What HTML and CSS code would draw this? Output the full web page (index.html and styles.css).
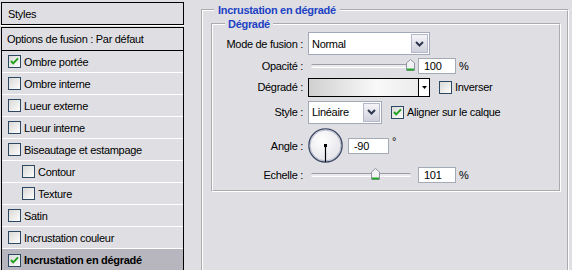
FILE: index.html
```html
<!DOCTYPE html>
<html lang="fr">
<head>
    <meta charset="UTF-8">
    <title>Style de calque - Incrustation en dégradé</title>
    <link rel="stylesheet" href="styles.css">
</head>
<body>
    <div class="dialog">
        <aside class="styles">
            <div class="styles-head">Styles</div>
            <ul class="styles-list">
                <li class="styles-item styles-item--options">Options de fusion : Par défaut</li>
                <li class="styles-item"><span class="check"><svg width="11" height="11" viewBox="0 0 11 11"><polyline points="2,5 4.2,7.4 9,2.4" /></svg></span>Ombre portée</li>
                <li class="styles-item"><span class="check"></span>Ombre interne</li>
                <li class="styles-item"><span class="check"></span>Lueur externe</li>
                <li class="styles-item"><span class="check"></span>Lueur interne</li>
                <li class="styles-item"><span class="check"></span>Biseautage et estampage</li>
                <li class="styles-item styles-item--sub"><span class="check"></span>Contour</li>
                <li class="styles-item styles-item--sub"><span class="check"></span>Texture</li>
                <li class="styles-item"><span class="check"></span>Satin</li>
                <li class="styles-item"><span class="check"></span>Incrustation couleur</li>
                <li class="styles-item is-active"><span class="check"><svg width="11" height="11" viewBox="0 0 11 11"><polyline points="2,5 4.2,7.4 9,2.4" /></svg></span>Incrustation en dégradé</li>
            </ul>
        </aside>

        <main class="settings">
            <fieldset class="group">
                <legend class="group-title">Incrustation en dégradé</legend>
                <fieldset class="group group--inner">
                    <legend class="group-title">Dégradé</legend>
                    <div class="form">
                        <label class="form-label">Mode de fusion :</label>
                        <div class="form-ctrl">
                            <div class="combo combo--wide">
                                <span class="combo-value">Normal</span>
                                <span class="combo-btn"><svg width="9" height="6" viewBox="0 0 9 6"><polyline points="1,1 4.5,4.5 8,1" /></svg></span>
                            </div>
                        </div>

                        <label class="form-label">Opacité :</label>
                        <div class="form-ctrl">
                            <div class="slider">
                                <div class="slider-track"></div>
                                <svg class="slider-thumb" style="left: calc(100% - 5px)" width="9" height="12" viewBox="0 0 9 12"><path d="M0.5,4 L4.5,0.5 L8.5,4 V11.5 H0.5 Z" /><rect x="1" y="9.5" width="7" height="2" /></svg>
                            </div>
                            <input class="num" value="100">
                            <span class="unit">%</span>
                        </div>

                        <label class="form-label">Dégradé :</label>
                        <div class="form-ctrl">
                            <div class="gradient">
                                <span class="gradient-fill"></span>
                                <span class="gradient-btn"><svg width="5" height="3" viewBox="0 0 5 3"><polygon points="0,0 5,0 2.5,3" /></svg></span>
                            </div>
                            <span class="option"><span class="check"></span>Inverser</span>
                        </div>

                        <label class="form-label">Style :</label>
                        <div class="form-ctrl">
                            <div class="combo combo--narrow">
                                <span class="combo-value">Linéaire</span>
                                <span class="combo-btn"><svg width="9" height="6" viewBox="0 0 9 6"><polyline points="1,1 4.5,4.5 8,1" /></svg></span>
                            </div>
                            <span class="option"><span class="check"><svg width="11" height="11" viewBox="0 0 11 11"><polyline points="2,5 4.2,7.4 9,2.4" /></svg></span>Aligner sur le calque</span>
                        </div>

                        <label class="form-label">Angle :</label>
                        <div class="form-ctrl">
                            <svg class="dial" width="36" height="36" viewBox="0 0 36 36">
                                <defs>
                                    <radialGradient id="dialFill" cx="40%" cy="35%" r="70%">
                                        <stop offset="0" stop-color="#ffffff" />
                                        <stop offset="1" stop-color="#e2e2e8" />
                                    </radialGradient>
                                </defs>
                                <circle cx="17.5" cy="17.5" r="16.6" fill="url(#dialFill)" stroke="#3d4866" stroke-width="1.4" />
                                <circle cx="17.5" cy="17.5" r="15.4" fill="none" stroke="#a9afc2" stroke-width="0.8" />
                                <line x1="17.5" y1="17.5" x2="17.5" y2="34" stroke="#000" stroke-width="1.2" />
                                <rect x="16" y="16" width="3" height="3" fill="#000" />
                            </svg>
                            <input class="num num--angle" value="-90">
                            <span class="degree">°</span>
                        </div>

                        <label class="form-label">Echelle :</label>
                        <div class="form-ctrl">
                            <div class="slider">
                                <div class="slider-track"></div>
                                <svg class="slider-thumb" style="left: calc(63.6% - 4px)" width="9" height="12" viewBox="0 0 9 12"><path d="M0.5,4 L4.5,0.5 L8.5,4 V11.5 H0.5 Z" /><rect x="1" y="9.5" width="7" height="2" /></svg>
                            </div>
                            <input class="num" value="101">
                            <span class="unit">%</span>
                        </div>
                    </div>
                </fieldset>
            </fieldset>
        </main>
    </div>
</body>
</html>
```

FILE: styles.css
```css
body {
    margin: 0;
    background-color: #dfdfe3;
    color: #000;
    font-family: "Liberation Sans", Arial, sans-serif;
    font-size: 11px;
    letter-spacing: -0.3px;
    overflow: hidden;
}

.dialog {
    display: flex;
    height: 270px;
}

/* Left column: list of layer styles */
.styles {
    flex: none;
    width: 183px;
    margin: 2px 0 0 1px;
}

.styles-head {
    height: 23px;
    box-sizing: border-box;
    border: 1px solid #000;
    padding-left: 6px;
    display: flex;
    align-items: center;
    margin-bottom: 2px;
    box-shadow: 0 1px 0 #fff;
}

.styles-list {
    list-style: none;
    margin: 0;
    padding: 0;
    border: 1px solid #000;
    border-bottom: 0;
}

.styles-item {
    height: 21px;
    border-bottom: 1px solid #fff;
    padding-left: 6px;
    display: flex;
    align-items: center;
    gap: 3px;
}

.styles-item--options {
    height: 22px;
    border-bottom-color: #000;
    padding-left: 5px;
}

.styles-item--sub {
    padding-left: 20px;
}

.styles-item.is-active {
    background-color: #b7b6be;
    font-weight: bold;
    border-bottom: 0;
    height: 22px;
}

/* XP style checkbox */
.check {
    flex: none;
    width: 13px;
    height: 13px;
    box-sizing: border-box;
    border: 1px solid #2c4863;
    background: linear-gradient(135deg, #d9d9d6, #fdfdfd);
    display: flex;
    align-items: center;
    justify-content: center;
}

.check polyline {
    fill: none;
    stroke: #21a121;
    stroke-width: 2;
}

/* Right column */
.settings {
    flex: 1;
    padding: 0 3px 0 17px;
}

.group {
    margin: 3px 0 0;
    padding: 0 6px 0 8px;
    border: 2px groove #fff;
    height: 300px;
}

.group-title {
    margin-left: 3px;
    padding: 0 4px;
    line-height: 14px;
    color: #2142c4;
    font-weight: bold;
}

.group--inner {
    height: auto;
    margin-top: 0;
    padding: 1px 0 7px 0;
}

.group--inner .group-title {
    margin-left: 12px;
    padding: 0 3px;
}

.form {
    display: grid;
    grid-template-columns: 90px auto;
    grid-template-rows: 23px 16px 20px 24px 37px 16px;
    column-gap: 5px;
    row-gap: 3px;
}

.form-label {
    display: flex;
    align-items: center;
    justify-content: flex-end;
}

.form-ctrl {
    display: flex;
    align-items: center;
}

/* Combo box */
.combo {
    height: 23px;
    box-sizing: border-box;
    border: 1px solid #a3a9b8;
    background-color: #fff;
    display: flex;
    align-items: stretch;
}

.combo--wide {
    width: 122px;
}

.combo--narrow {
    width: 74px;
}

.combo-value {
    flex: 1;
    padding-left: 3px;
    display: flex;
    align-items: center;
}

.combo-btn {
    width: 15px;
    margin: 1px;
    border: 1px solid #b4b8ca;
    background: linear-gradient(#f4f4f8, #d1d1dc);
    display: flex;
    align-items: center;
    justify-content: center;
}

.combo-btn polyline {
    fill: none;
    stroke: #2f3850;
    stroke-width: 2;
}

/* Slider */
.slider {
    position: relative;
    width: 100px;
    height: 12px;
    margin: 0 7px 0 3px;
    display: flex;
    align-items: center;
}

.slider-track {
    width: 100%;
    height: 2px;
    border-top: 1px solid #9c9ca4;
    border-bottom: 1px solid #fff;
    background-color: #e9e9ee;
    border-radius: 2px;
}

.slider-thumb {
    position: absolute;
    top: -1px;
}

.slider-thumb path {
    fill: #f2f2f5;
    stroke: #8d93a5;
}

.slider-thumb rect {
    fill: #26a526;
}

/* Number fields */
.num {
    width: 38px;
    height: 16px;
    box-sizing: border-box;
    margin: 0;
    border: 1px solid #a5aab7;
    padding: 0 0 0 5px;
    background-color: #fff;
    font: inherit;
    letter-spacing: inherit;
    color: #000;
}

.num--angle {
    width: 41px;
    margin-left: 4px;
}

.unit {
    margin-left: 3px;
}

.degree {
    align-self: flex-start;
    margin: 8px 0 0 3px;
}

/* Gradient preview */
.gradient {
    width: 122px;
    height: 19px;
    box-sizing: border-box;
    border: 1px solid #000;
    display: flex;
}

.gradient-fill {
    flex: 1;
    background: linear-gradient(to right, #d0d0d0, #f9f9f9 62%, #ececec);
}

.gradient-btn {
    width: 10px;
    border-left: 1px solid #000;
    background-color: #fff;
    display: flex;
    align-items: center;
    justify-content: center;
}

.option {
    display: flex;
    align-items: center;
    gap: 3px;
    margin-left: 9px;
}

.dial {
    flex: none;
}
```
